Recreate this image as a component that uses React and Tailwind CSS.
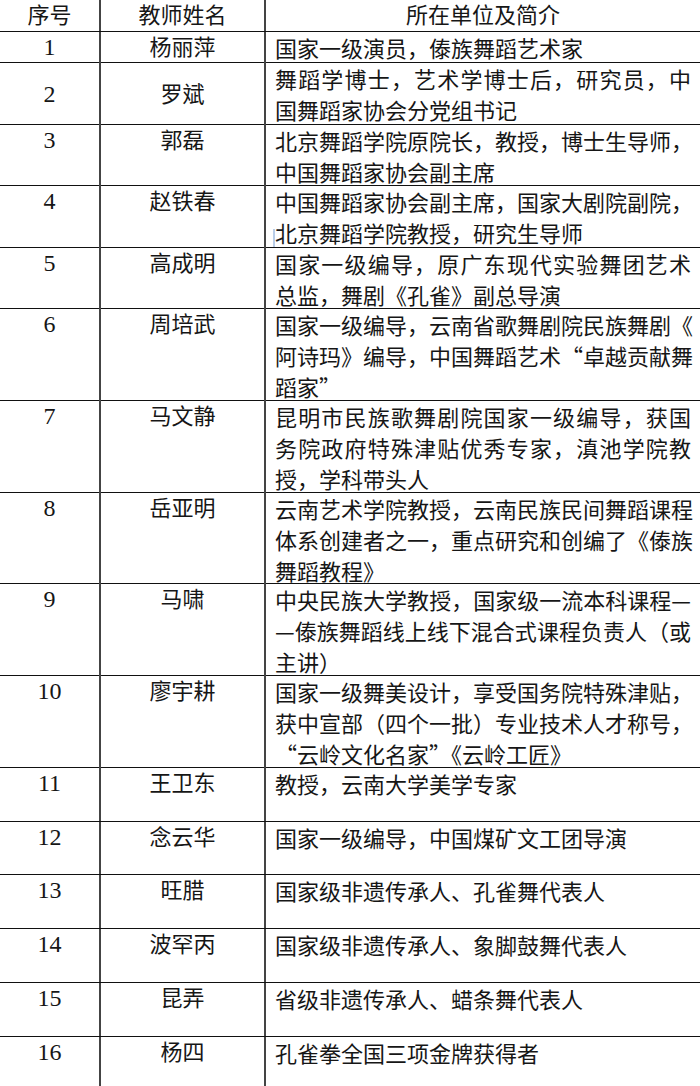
const rows = [
  { n: "1", name: "杨丽萍", h: "h-[31px]", lines: ["国家一级演员，傣族舞蹈艺术家"] },
  { n: "2", name: "罗斌", h: "h-[62px]", lines: ["舞蹈学博士，艺术学博士后，研究员，中", "国舞蹈家协会分党组书记"], middle: true },
  { n: "3", name: "郭磊", h: "h-[61px]", lines: ["北京舞蹈学院原院长，教授，博士生导师，", "中国舞蹈家协会副主席"] },
  { n: "4", name: "赵铁春", h: "h-[62px]", lines: ["中国舞蹈家协会副主席，国家大剧院副院，", "北京舞蹈学院教授，研究生导师"], cursor: true },
  { n: "5", name: "高成明", h: "h-[61px]", lines: ["国家一级编导，原广东现代实验舞团艺术", "总监，舞剧《孔雀》副总导演"] },
  { n: "6", name: "周培武", h: "h-[92px]", lines: ["国家一级编导，云南省歌舞剧院民族舞剧《", "阿诗玛》编导，中国舞蹈艺术“卓越贡献舞", "蹈家”"] },
  { n: "7", name: "马文静", h: "h-[92px]", lines: ["昆明市民族歌舞剧院国家一级编导，获国", "务院政府特殊津贴优秀专家，滇池学院教", "授，学科带头人"] },
  { n: "8", name: "岳亚明", h: "h-[91px]", lines: ["云南艺术学院教授，云南民族民间舞蹈课程", "体系创建者之一，重点研究和创编了《傣族", "舞蹈教程》"] },
  { n: "9", name: "马啸", h: "h-[92px]", lines: ["中央民族大学教授，国家级一流本科课程—", "—傣族舞蹈线上线下混合式课程负责人（或", "主讲）"] },
  { n: "10", name: "廖宇耕", h: "h-[92px]", lines: ["国家一级舞美设计，享受国务院特殊津贴，", "获中宣部（四个一批）专业技术人才称号，", "“云岭文化名家”《云岭工匠》"] },
  { n: "11", name: "王卫东", h: "h-[54px]", lines: ["教授，云南大学美学专家"] },
  { n: "12", name: "念云华", h: "h-[53px]", lines: ["国家一级编导，中国煤矿文工团导演"] },
  { n: "13", name: "旺腊", h: "h-[54px]", lines: ["国家级非遗传承人、孔雀舞代表人"] },
  { n: "14", name: "波罕丙", h: "h-[54px]", lines: ["国家级非遗传承人、象脚鼓舞代表人"] },
  { n: "15", name: "昆弄", h: "h-[54px]", lines: ["省级非遗传承人、蜡条舞代表人"] },
  { n: "16", name: "杨四", h: "h-[54px]", lines: ["孔雀拳全国三项金牌获得者"] },
];

const Row = ({ n, name, h, lines, cursor, middle }) => {
  const align = middle ? "flex items-center justify-center" : "text-center";
  return (
    <div className={`grid grid-cols-[101px_165px_1fr] border-b border-[#111] ${h}`}>
      <div className={`border-r-2 border-[#444] text-[24px] ${align}`}>{n}</div>
      <div className={`border-r-2 border-[#444] ${align}`}>{name}</div>
      <div className="relative pl-[9px] [font-family:'Noto_Sans_CJK_SC',sans-serif]">
        {cursor && <span className="absolute left-[7px] top-[43px] h-[18px] w-[2px] bg-[#b9cde8]" />}
        {lines.map((line, i) => (
          <div
            key={i}
            className={
              i < lines.length - 1
                ? "w-[416px] whitespace-nowrap text-justify [text-align-last:justify]"
                : "whitespace-nowrap"
            }
          >
            {line}
          </div>
        ))}
      </div>
    </div>
  );
};

export default function App() {
  return (
    <div className="h-[1086px] w-[700px] overflow-hidden bg-white text-[22px] leading-[31px] text-[#161616] [font-family:'Liberation_Serif','Noto_Sans_CJK_SC',serif]">
      <div className="grid h-[32px] grid-cols-[101px_165px_1fr] border-b border-[#111]">
        <div className="border-r-2 border-[#444] text-center">序号</div>
        <div className="border-r-2 border-[#444] text-center">教师姓名</div>
        <div className="text-center">所在单位及简介</div>
      </div>
      {rows.map((r) => (
        <Row key={r.n} {...r} />
      ))}
    </div>
  );
}
